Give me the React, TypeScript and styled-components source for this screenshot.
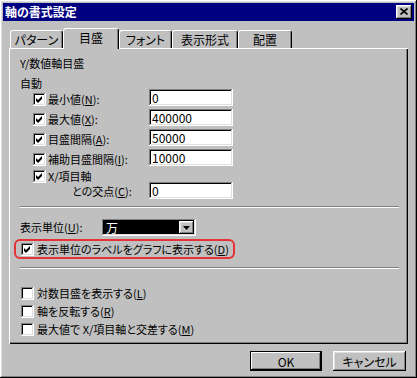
import styled, { createGlobalStyle } from "styled-components";

const FACE = "#c0c0c0";
const LIGHT = "#dfdfdf";
const SHADOW = "#808080";
const DARK = "#000000";
const NAVY = "#000080";

const sunken = `box-shadow: inset -1px -1px #fff, inset 1px 1px ${SHADOW}, inset -2px -2px ${LIGHT}, inset 2px 2px ${DARK};`;
const raised = `box-shadow: inset -1px -1px ${DARK}, inset 1px 1px #fff, inset -2px -2px ${SHADOW}, inset 2px 2px ${LIGHT};`;

const tabs = [
  { name: "パターン", width: 53 },
  { name: "目盛", width: 56, active: true },
  { name: "フォント", width: 53 },
  { name: "表示形式", width: 66 },
  { name: "配置", width: 54 },
];

const autoFields = [
  { label: "最小値", key: "N", value: "0" },
  { label: "最大値", key: "X", value: "400000" },
  { label: "目盛間隔", key: "A", value: "50000" },
  { label: "補助目盛間隔", key: "I", value: "10000" },
];

const options = [
  { label: "対数目盛を表示する", key: "L" },
  { label: "軸を反転する", key: "R" },
  { label: "最大値で X/項目軸と交差する", key: "M" },
];

const Mnemonic = ({ text, k, colon }: { text: string; k: string; colon?: boolean }) => (
  <>
    {text}(<u>{k}</u>){colon ? ":" : ""}
  </>
);

const Check = ({ checked }: { checked?: boolean }) => (
  <CheckBox>
    {checked && (
      <svg width="7" height="7" viewBox="0 0 7 7">
        <polygon points="0,2 2,4 6,0 6,3 2,7 0,5" fill="#000" />
      </svg>
    )}
  </CheckBox>
);

const App = () => {
  return (
    <>
      <GlobalStyle />
      <Window>
        <TitleBar>
          <Title>軸の書式設定</Title>
          <CloseButton>
            <svg width="8" height="7" viewBox="0 0 8 7">
              <path d="M0.5 0.5 L7.5 6.5 M7.5 0.5 L0.5 6.5" stroke="#000" strokeWidth="1.6" />
            </svg>
          </CloseButton>
        </TitleBar>

        <Body>
          <TabStrip>
            {tabs.map((t) => (
              <Tab key={t.name} $active={t.active} $width={t.width}>
                {t.name}
              </Tab>
            ))}
          </TabStrip>

          <Panel>
            <Heading>Y/数値軸目盛</Heading>
            <Heading $gap={8}>自動</Heading>

            <Fields>
              {autoFields.map((f) => (
                <FieldRow key={f.key}>
                  <FieldLabel>
                    <Check checked />
                    <span>
                      <Mnemonic text={f.label} k={f.key} colon />
                    </span>
                  </FieldLabel>
                  <TextBox>{f.value}</TextBox>
                </FieldRow>
              ))}

              <CrossRow>
                <CrossLabels>
                  <FieldLabel $top={1}>
                    <Check checked />
                    <span>X/項目軸</span>
                  </FieldLabel>
                  <SubLabel>
                    <Mnemonic text="との交点" k="C" colon />
                  </SubLabel>
                </CrossLabels>
                <TextBox $top={13}>0</TextBox>
              </CrossRow>
            </Fields>

            <Separator $gap={7} />

            <UnitRow>
              <UnitLabel>
                <Mnemonic text="表示単位" k="U" colon />
              </UnitLabel>
              <Select>
                <SelectValue>万</SelectValue>
                <SelectButton>
                  <svg width="7" height="4" viewBox="0 0 7 4">
                    <polygon points="0,0 7,0 3.5,4" fill="#000" />
                  </svg>
                </SelectButton>
              </Select>
            </UnitRow>

            <Highlight>
              <Check checked />
              <span>
                <Mnemonic text="表示単位のラベルをグラフに表示する" k="D" />
              </span>
            </Highlight>

            <Separator $gap={8} />

            <Options>
              {options.map((o) => (
                <OptionRow key={o.key}>
                  <Check />
                  <span>
                    <Mnemonic text={o.label} k={o.key} />
                  </span>
                </OptionRow>
              ))}
            </Options>
          </Panel>

          <Buttons>
            <Button $default>OK</Button>
            <Button>キャンセル</Button>
          </Buttons>
        </Body>
      </Window>
    </>
  );
};

export default App;

const GlobalStyle = createGlobalStyle`
  html, body {
    margin: 0;
    padding: 0;
    background: ${FACE};
  }
  u {
    text-decoration-thickness: 1px;
    text-underline-offset: 1px;
  }
`;

const Window = styled.div`
  box-sizing: border-box;
  width: 417px;
  height: 378px;
  padding: 3px;
  background: ${FACE};
  ${raised}
  display: flex;
  flex-direction: column;
  font-family: "Noto Sans CJK JP", sans-serif;
  font-size: 11px;
  font-feature-settings: "palt";
  color: #000;
  user-select: none;
`;

const TitleBar = styled.div`
  height: 18px;
  background: ${NAVY};
  display: flex;
  align-items: center;
  justify-content: space-between;
  padding: 0 2px 0 2px;
`;

const Title = styled.div`
  color: #fff;
  font-weight: bold;
  font-size: 12px;
  line-height: 14px;
`;

const CloseButton = styled.div`
  box-sizing: border-box;
  width: 16px;
  height: 14px;
  background: ${FACE};
  ${raised}
  display: grid;
  place-items: center;
  padding-bottom: 1px;
`;

const Body = styled.div`
  flex: 1;
  display: flex;
  flex-direction: column;
  padding: 7px 6px 0 6px;
`;

const TabStrip = styled.div`
  display: flex;
  align-items: flex-end;
  height: 20px;
  padding-left: 1px;
`;

const Tab = styled.div<{ $active?: boolean; $width: number }>`
  box-sizing: border-box;
  position: relative;
  z-index: ${(p) => (p.$active ? 1 : 0)};
  width: ${(p) => p.$width}px;
  height: ${(p) => (p.$active ? 21 : 18)}px;
  margin-bottom: ${(p) => (p.$active ? -1 : 0)}px;
  background: ${FACE};
  border-top: 1px solid #fff;
  border-left: 1px solid #fff;
  border-right: 1px solid ${DARK};
  border-radius: 3px 3px 0 0;
  box-shadow: inset -1px 0 ${SHADOW};
  display: flex;
  align-items: center;
  justify-content: center;
  padding-bottom: ${(p) => (p.$active ? 2 : 0)}px;
  font-size: 12px;
  line-height: 14px;
`;

const Panel = styled.div`
  box-sizing: border-box;
  width: 399px;
  height: 296px;
  padding: 9px 0 0 11px;
  background: ${FACE};
  box-shadow: inset 1px 1px #fff, inset -1px -1px ${DARK}, inset -2px -2px ${SHADOW};
  display: flex;
  flex-direction: column;
`;

const Heading = styled.div<{ $gap?: number }>`
  line-height: 12px;
  margin-top: ${(p) => p.$gap ?? 0}px;
`;

const Fields = styled.div`
  padding-left: 13px;
  display: flex;
  flex-direction: column;
`;

const FieldRow = styled.div`
  display: flex;
  align-items: flex-start;
  height: 20px;
`;

const FieldLabel = styled.div<{ $top?: number }>`
  width: 116px;
  display: flex;
  align-items: center;
  gap: 2px;
  padding-top: ${(p) => p.$top ?? 4}px;
  line-height: 13px;
  white-space: nowrap;
`;

const CheckBox = styled.span`
  box-sizing: border-box;
  flex: none;
  width: 13px;
  height: 13px;
  background: #fff;
  ${sunken}
  display: grid;
  place-items: center;
`;

const TextBox = styled.div<{ $top?: number }>`
  box-sizing: border-box;
  width: 84px;
  height: 17px;
  margin-top: ${(p) => p.$top ?? 0}px;
  padding: 2px 3px 0;
  background: #fff;
  ${sunken}
  font-size: 12px;
  line-height: 13px;
`;

const CrossRow = styled.div`
  display: flex;
  align-items: flex-start;
`;

const CrossLabels = styled.div`
  display: flex;
  flex-direction: column;
`;

const SubLabel = styled.div`
  padding-left: 39px;
  margin-top: 2px;
  line-height: 12px;
`;

const Separator = styled.div<{ $gap: number }>`
  width: 379px;
  margin-top: ${(p) => p.$gap}px;
  border-top: 1px solid ${SHADOW};
  border-bottom: 1px solid #fff;
`;

const UnitRow = styled.div`
  display: flex;
  align-items: center;
  margin-top: 11px;
`;

const UnitLabel = styled.div`
  width: 82px;
  line-height: 13px;
`;

const Select = styled.div`
  box-sizing: border-box;
  width: 94px;
  height: 17px;
  padding: 2px;
  background: #fff;
  ${sunken}
  display: flex;
`;

const SelectValue = styled.div`
  flex: 1;
  background: ${DARK};
  color: #fff;
  line-height: 13px;
  padding-left: 2px;
  font-size: 12px;
`;

const SelectButton = styled.div`
  box-sizing: border-box;
  width: 15px;
  background: ${FACE};
  ${raised}
  display: grid;
  place-items: center;
`;

const Highlight = styled.div`
  box-sizing: border-box;
  width: 221px;
  height: 20px;
  margin: 3px 0 0 -6px;
  padding: 1px 0 0 5px;
  border: 2px solid #e53238;
  border-radius: 6px;
  display: flex;
  align-items: center;
  gap: 3px;
  line-height: 13px;
  white-space: nowrap;
`;

const Options = styled.div`
  margin-top: 18px;
  padding-left: 1px;
  display: flex;
  flex-direction: column;
`;

const OptionRow = styled.div`
  display: flex;
  align-items: center;
  gap: 3px;
  height: 13px;
  margin-bottom: 5px;
  line-height: 13px;
  white-space: nowrap;
`;

const Buttons = styled.div`
  display: flex;
  justify-content: flex-end;
  gap: 11px;
  margin-top: 7px;
  padding-right: 2px;
`;

const Button = styled.div<{ $default?: boolean }>`
  box-sizing: border-box;
  width: ${(p) => (p.$default ? 72 : 73)}px;
  height: 20px;
  background: ${FACE};
  ${(p) =>
    p.$default
      ? `border: 1px solid ${DARK}; box-shadow: inset -1px -1px ${DARK}, inset 1px 1px #fff, inset -2px -2px ${SHADOW};`
      : raised}
  display: grid;
  place-items: center;
  font-size: 12px;
  line-height: 13px;
`;
